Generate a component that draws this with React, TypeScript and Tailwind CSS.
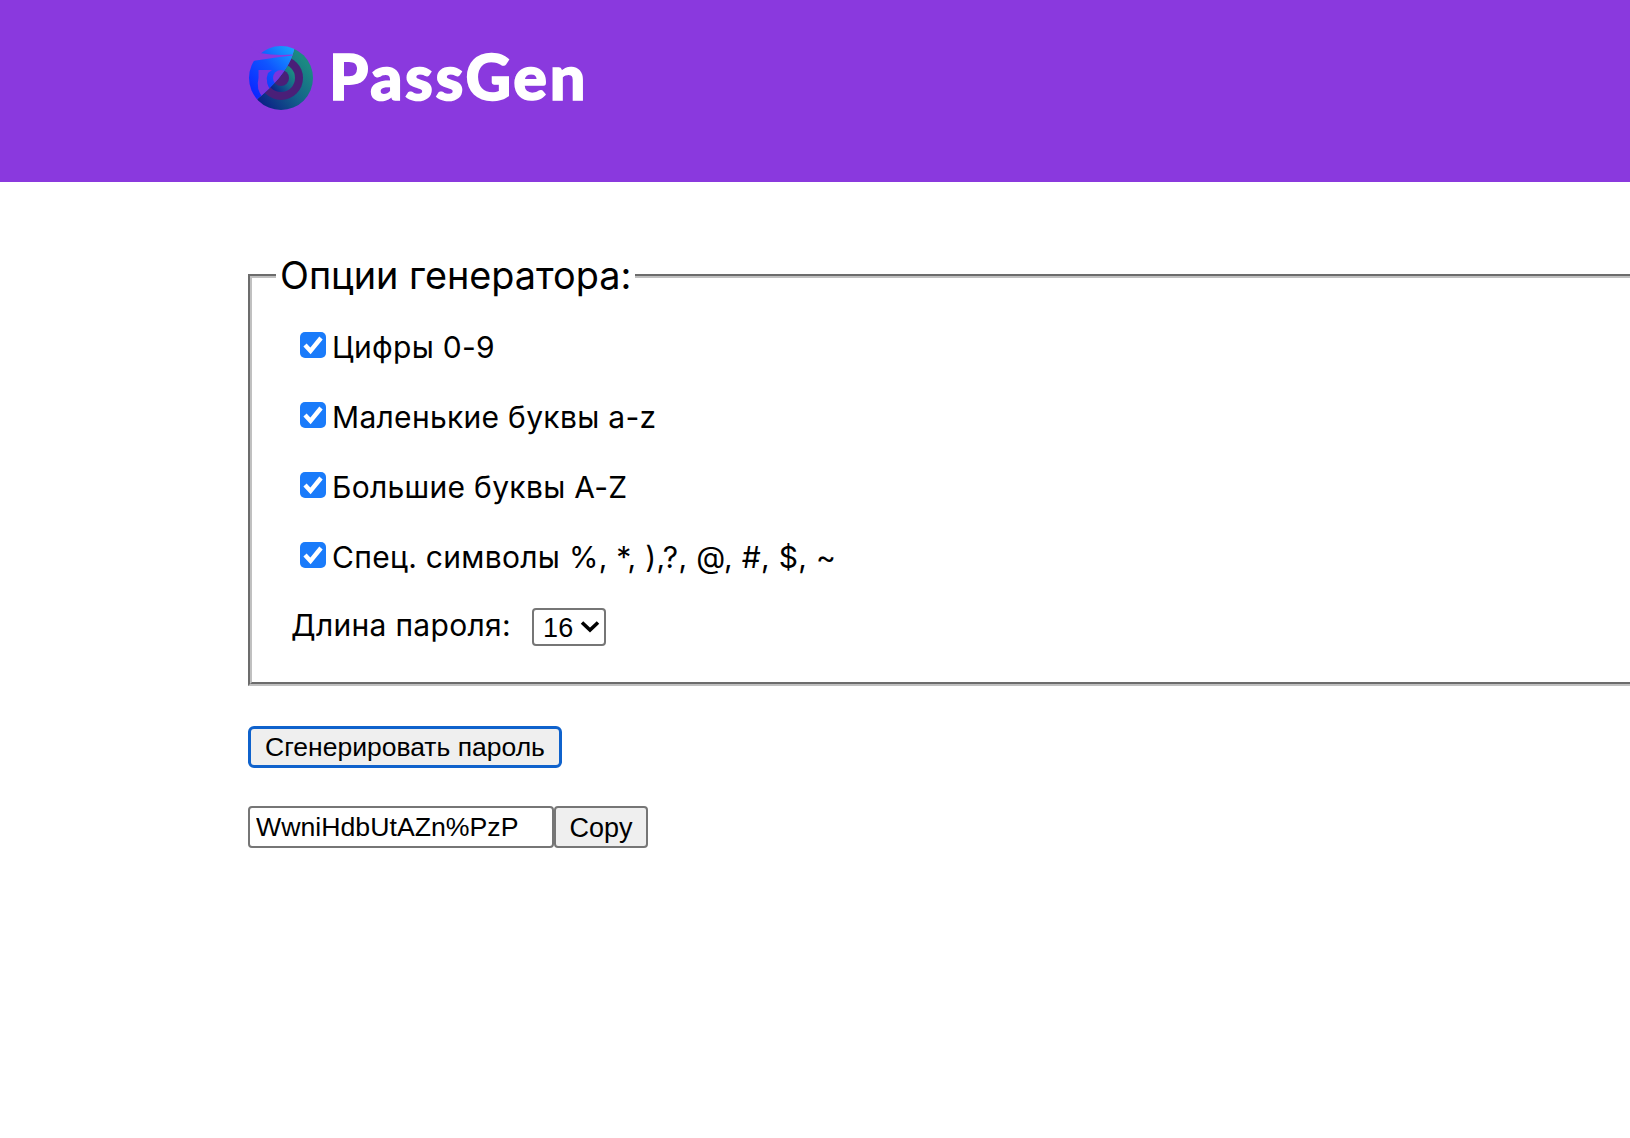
const options = [
  "Цифры 0-9",
  "Маленькие буквы a-z",
  "Большие буквы A-Z",
  "Спец. символы %, *, ),?, @, #, $, ~",
];

function Logo() {
  return (
    <svg width="64" height="64" viewBox="0 0 64 64" className="shrink-0">
      <defs>
        <linearGradient id="blue" x1="0" y1="1" x2="1" y2="0">
          <stop offset="0.1" stopColor="#0b1fff" />
          <stop offset="0.5" stopColor="#0f55ff" />
          <stop offset="0.9" stopColor="#19b4ff" />
        </linearGradient>
        <linearGradient id="teal" x1="0" y1="1" x2="1" y2="0.2">
          <stop offset="0.15" stopColor="#0a1f86" />
          <stop offset="0.55" stopColor="#14608a" />
          <stop offset="0.9" stopColor="#1b8a82" />
        </linearGradient>
        <clipPath id="upper">
          <path d="M46 0 C43 14 38 22 30 32 C24 39 17 46 9 52.5 L0 64 L-4 0 Z" />
        </clipPath>
        <clipPath id="lower">
          <path d="M46 0 C43 14 38 22 30 32 C24 39 17 46 9 52.5 L0 64 L64 64 L64 0 Z" />
        </clipPath>
      </defs>
      <g clipPath="url(#lower)">
        <circle cx="32" cy="32" r="32" fill="url(#teal)" />
        <circle cx="32" cy="32" r="22" fill="#4a1f78" />
        <circle cx="32" cy="32" r="14" fill="url(#teal)" />
        <circle cx="32" cy="32" r="8" fill="#4a1f78" />
      </g>
      <g clipPath="url(#upper)">
        <circle cx="32" cy="32" r="32" fill="url(#blue)" />
        <path d="M9.5 24 H23 L19 27 A16 16 0 0 0 24 46 L14 52 A22.5 22.5 0 0 1 9.5 32 Z" fill="#7b35dd" />
        <circle cx="32" cy="32" r="8" fill="#7b35dd" />
        <path d="M-2 -2 L11 7 C22 9 32 9.5 44 8.5 L44 9.5 C30 11 16 13 -2 16 Z" fill="#8a39de" />
      </g>
    </svg>
  );
}

function Checkbox() {
  return (
    <span className="relative mr-[6px] mb-[4px] h-[26px] w-[26px] shrink-0">
      <input
        type="checkbox"
        defaultChecked
        className="block h-[26px] w-[26px] appearance-none rounded-[5px] bg-[#1a7bfa]"
      />
      <svg
        width="26"
        height="26"
        viewBox="0 0 26 26"
        fill="none"
        stroke="#fff"
        strokeWidth="4.4"
        className="pointer-events-none absolute left-0 top-0"
      >
        <path d="M5 13 L10.5 19 L21 6" />
      </svg>
    </span>
  );
}

export default function App() {
  return (
    <div className="min-h-[1138px] overflow-hidden bg-white font-['Liberation_Sans',Arial,sans-serif] text-black">
      <header className="flex h-[182px] items-start bg-[#8a39de] pl-[249px] pt-[46px]">
        <Logo />
        <span className="ml-[16px] mt-[-2px] font-['Lato',sans-serif] text-[63px] leading-[64px] font-black tracking-[2.6px] text-white [-webkit-text-stroke:1.5px_white]">
          PassGen
        </span>
      </header>

      <main className="w-[1500px] pl-[248px] pt-[72px]">
        <fieldset className="w-[1500px] border-[4px] border-[#c0c0c0] pb-[36px] pl-[39px] pt-[6px] [border-style:groove]!">
          <legend className="ml-[-15px] px-[4px] font-['Inter',sans-serif] text-[37.8px] leading-[43px]">
            Опции генератора:
          </legend>
          <div className="flex flex-col gap-[40px] pl-[9px] pt-[29px]">
            {options.map((text) => (
              <label
                key={text}
                className="flex h-[30px] items-center font-['Inter',sans-serif] text-[30px] leading-[36px] tracking-[0.3px]"
              >
                <Checkbox />
                {text}
              </label>
            ))}
          </div>
          <div className="mt-[35px] flex items-center font-['Inter',sans-serif] text-[30px] leading-[36px] tracking-[0.3px]">
            <span className="mb-[3px]">Длина пароля:</span>
            <div className="relative ml-[21px] mt-[1px] h-[38px] w-[74px]">
              <select
                defaultValue="16"
                className="h-full w-full appearance-none rounded-[4px] border-2 border-[#767676] bg-white pl-[9px] font-['Liberation_Sans',Arial,sans-serif] text-[27px]"
              >
                <option>8</option>
                <option>12</option>
                <option>16</option>
                <option>24</option>
              </select>
              <svg
                width="20"
                height="13"
                viewBox="0 0 20 13"
                fill="none"
                stroke="#000"
                strokeWidth="3.6"
                className="pointer-events-none absolute right-[6px] top-[12px]"
              >
                <path d="M2 2.5 L10 10 L18 2.5" />
              </svg>
            </div>
          </div>
        </fieldset>

        <button className="mt-[40px] block h-[42px] w-[314px] rounded-[6px] border-[3px] border-[#0f62cc] bg-[#efefef] text-[26.5px] leading-[30px]">
          Сгенерировать пароль
        </button>

        <div className="mt-[38px] flex">
          <input
            readOnly
            value="WwniHdbUtAZn%PzP"
            className="h-[42px] w-[306px] rounded-[4px] border-2 border-[#767676] bg-white px-[6px] text-[26.7px]"
          />
          <button className="h-[42px] w-[94px] rounded-[4px] border-2 border-[#767676] bg-[#efefef] text-[27px]">
            Copy
          </button>
        </div>
      </main>
    </div>
  );
}
